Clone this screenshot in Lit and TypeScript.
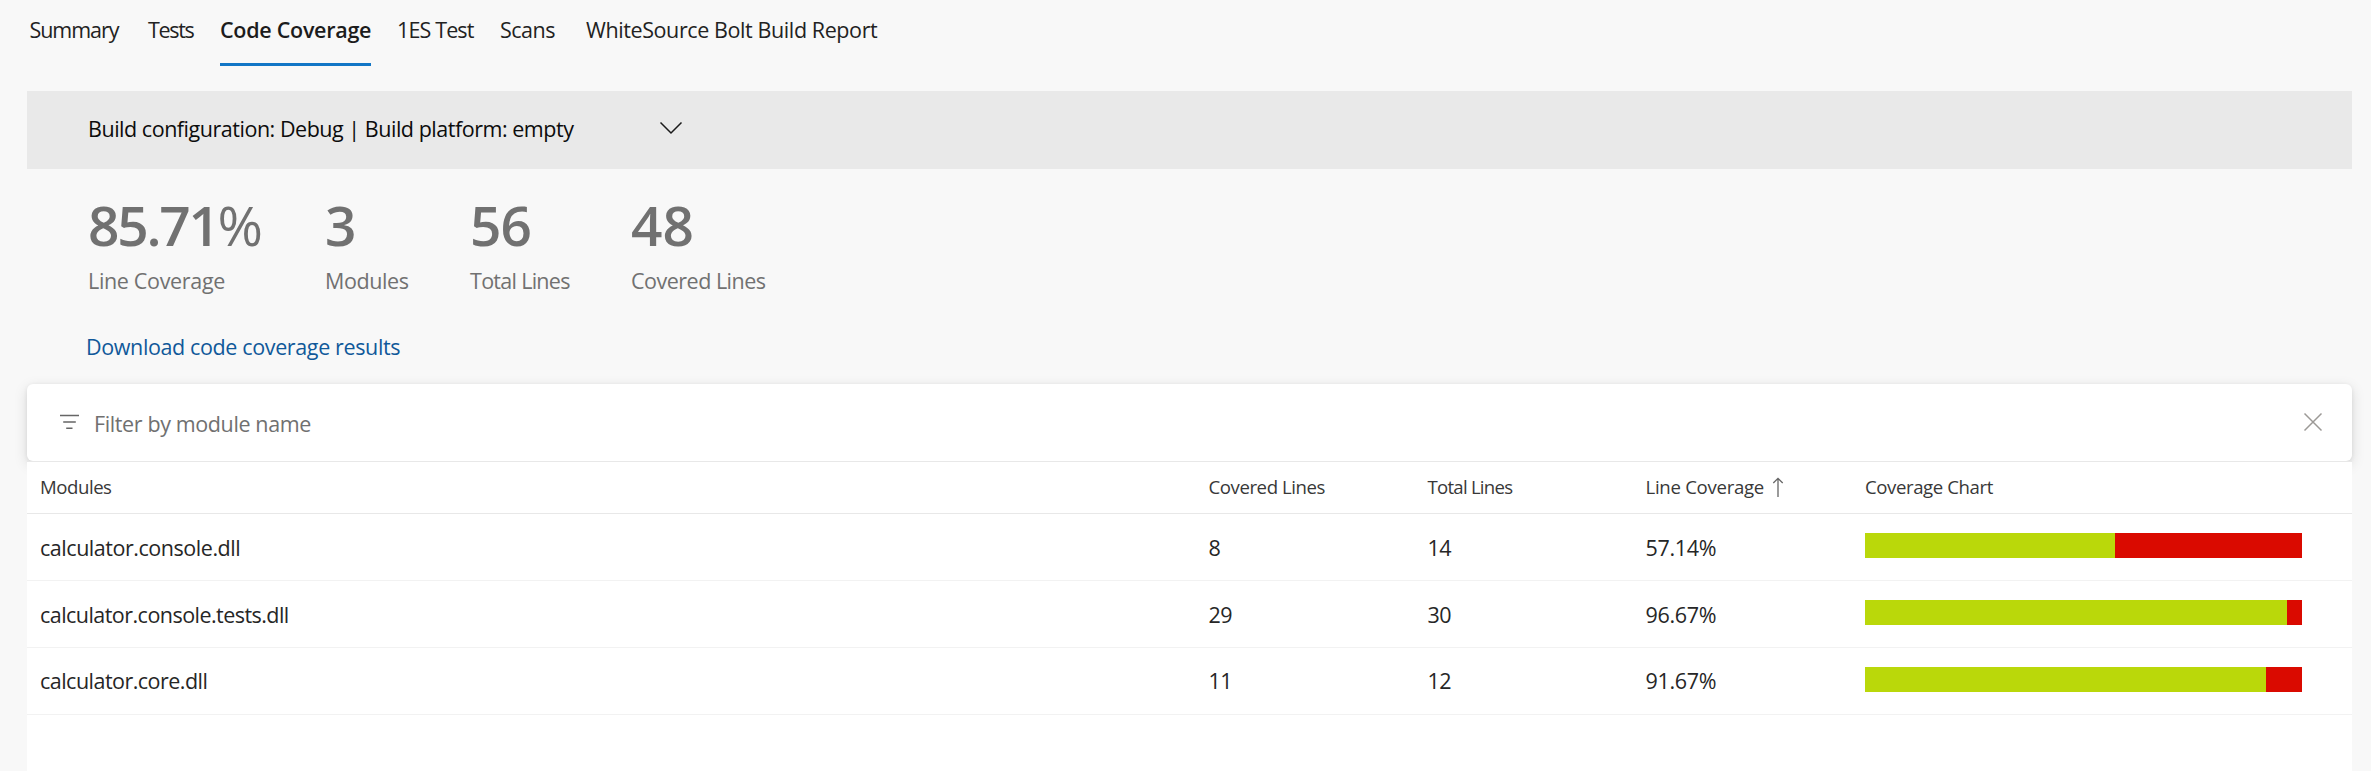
import { LitElement, html, css } from "lit";
import { customElement, property } from "lit/decorators.js";

const base = css`
  * { box-sizing: border-box; }
  :host {
    font-family: "Open Sans", "Noto Sans", sans-serif;
    font-size: 21.5px;
    line-height: 30px;
    white-space: nowrap;
  }
`;

@customElement("coverage-tabs")
class CoverageTabs extends LitElement {
  static styles = [base, css`
    :host { display: block; }
    .tabs {
      display: grid;
      grid-template-columns: 118.5px 72px 177px 103px 86px auto;
      padding-left: 29.5px;
      height: 66px;
      color: #222;
    }
    .tab { padding-top: 15px; justify-self: start; }
    .active {
      width: 151px;
      font-weight: 600;
      color: #1c1c1c;
      border-bottom: 3px solid #1276c6;
    }
    .summary { letter-spacing: -1.05px; }
    .tests { letter-spacing: -1.3px; }
    .code { letter-spacing: -0.28px; }
    .one-es { letter-spacing: -0.86px; }
    .scans { letter-spacing: -0.5px; }
    .bolt { letter-spacing: -0.4px; }
  `];
  render() {
    return html`<nav class="tabs">
      <span class="tab summary">Summary</span>
      <span class="tab tests">Tests</span>
      <span class="tab code active">Code Coverage</span>
      <span class="tab one-es">1ES Test</span>
      <span class="tab scans">Scans</span>
      <span class="tab bolt">WhiteSource Bolt Build Report</span>
    </nav>`;
  }
}

@customElement("coverage-summary")
class CoverageSummary extends LitElement {
  static styles = [base, css`
    :host { display: block; }
    .config {
      display: flex;
      height: 78px;
      padding: 23px 0 0 61px;
      background: #e9e9e9;
      color: #0c0c0c;
    }
    .config-text { width: 571px; letter-spacing: -0.47px; }
    .chevron { width: 24px; height: 16px; margin-top: 6px; }
    .stats {
      display: grid;
      grid-template-columns: 237px 145px 161px auto;
      padding: 26px 0 0 61px;
      color: #717171;
    }
    .value {
      font-size: 55px;
      font-weight: 600;
      line-height: 60px;
      margin-bottom: 11px;
    }
    .pct { letter-spacing: -2.25px; }
    .sign { font-weight: 400; }
    .lines { letter-spacing: -1px; }
    .l-rate { letter-spacing: -0.33px; }
    .l-modules { letter-spacing: -0.4px; }
    .l-total { letter-spacing: -0.71px; }
    .l-covered { letter-spacing: -0.5px; }
    .download {
      display: block;
      margin: 36px 0 22px 59px;
      color: #10599a;
      letter-spacing: -0.37px;
    }
  `];
  render() {
    return html`
      <div class="config">
        <span class="config-text">Build configuration: Debug | Build platform: empty</span>
        <svg class="chevron" viewBox="0 0 24 16" fill="none" stroke="#1a1a1a" stroke-width="1.5">
          <path d="M1.5 2.5 L12 13 L22.5 2.5" />
        </svg>
      </div>
      <div class="stats">
        <div><div class="value pct">85.71<span class="sign">%</span></div><div class="l-rate">Line Coverage</div></div>
        <div><div class="value">3</div><div class="l-modules">Modules</div></div>
        <div><div class="value lines">56</div><div class="l-total">Total Lines</div></div>
        <div><div class="value">48</div><div class="l-covered">Covered Lines</div></div>
      </div>
      <a class="download">Download code coverage results</a>
    `;
  }
}

@customElement("module-filter")
class ModuleFilter extends LitElement {
  static styles = [base, css`
    :host { display: block; }
    .card {
      display: flex;
      height: 77px;
      padding: 26px 29px 0 32px;
      background: #fff;
      border-radius: 6px;
      box-shadow: 0 4px 14px rgba(0, 0, 0, 0.13), 0 1px 4px rgba(0, 0, 0, 0.07);
      color: #707070;
    }
    .icon { width: 20px; height: 20px; margin: 2px 15px 0 0; }
    .text { flex: 1; letter-spacing: -0.38px; line-height: 28px; }
    .clear { width: 20px; height: 20px; margin-top: 2px; }
  `];
  render() {
    return html`<div class="card">
      <svg class="icon" viewBox="0 0 20 20" stroke="#666" stroke-width="1.4">
        <path d="M1 3.5H20M4.2 10H16.8M7.2 16.3H13.5" />
      </svg>
      <span class="text">Filter by module name</span>
      <svg class="clear" viewBox="0 0 20 20" stroke="#9c9996" stroke-width="1.5">
        <path d="M1.5 1.5L18.5 18.5M18.5 1.5L1.5 18.5" />
      </svg>
    </div>`;
  }
}

@customElement("coverage-bar")
class CoverageBar extends LitElement {
  @property({ type: Number }) covered = 0;
  @property({ type: Number }) total = 1;
  static styles = css`
    :host { display: block; }
    .bar { height: 25px; background: #da0a00; }
    .fill { height: 25px; background: #bad80a; }
  `;
  render() {
    return html`<div class="bar">
      <div class="fill" style="width:${Math.round((this.covered / this.total) * 437)}px"></div>
    </div>`;
  }
}

const modules = [
  { name: "calculator.console.dll", key: "console", covered: 8, total: 14, rate: "57.14%" },
  { name: "calculator.console.tests.dll", key: "suite", covered: 29, total: 30, rate: "96.67%" },
  { name: "calculator.core.dll", key: "core", covered: 11, total: 12, rate: "91.67%" },
];

@customElement("module-table")
class ModuleTable extends LitElement {
  static styles = [base, css`
    :host { display: block; flex: 1; background: #fff; border-top: 1px solid #e8e8e8; }
    .row {
      display: grid;
      grid-template-columns: 1168.5px 219px 218px 219.5px 437px;
      align-items: center;
      height: 67px;
      padding: 1px 0 0 13px;
      border-bottom: 1px solid #f2f2f2;
      color: #262626;
    }
    .row:last-child { padding-top: 0; }
    .row:last-child .chart { margin-top: 19px; }
    .head {
      height: 52px;
      padding: 0 0 1px 13px;
      font-size: 18.6px;
      color: #383838;
      border-bottom-color: #e8e8e8;
    }
    .sorted { display: flex; align-items: center; gap: 8px; }
    .arrow { width: 12px; height: 20px; }
    .h-modules { letter-spacing: -0.45px; }
    .h-covered { letter-spacing: -0.42px; }
    .h-total { letter-spacing: -0.75px; }
    .h-rate { letter-spacing: -0.28px; }
    .h-chart { letter-spacing: -0.41px; }
    .console { letter-spacing: -0.46px; }
    .suite { letter-spacing: -0.54px; }
    .core { letter-spacing: -0.52px; }
    .num { letter-spacing: -0.5px; }
    .rate { letter-spacing: -0.3px; }
    .chart { align-self: start; margin-top: 18px; }
  `];
  render() {
    return html`
      <div class="row head">
        <span class="h-modules">Modules</span>
        <span class="h-covered">Covered Lines</span>
        <span class="h-total">Total Lines</span>
        <span class="sorted">
          <span class="h-rate">Line Coverage</span>
          <svg class="arrow" viewBox="0 0 12 20" fill="none" stroke="#666" stroke-width="1.3">
            <path d="M6 1V20M1.3 6L6 1.3L10.7 6" />
          </svg>
        </span>
        <span class="h-chart">Coverage Chart</span>
      </div>
      ${modules.map((m) => html`<div class="row">
        <span class=${m.key}>${m.name}</span>
        <span class="num">${m.covered}</span>
        <span class="num">${m.total}</span>
        <span class="rate">${m.rate}</span>
        <coverage-bar class="chart" .covered=${m.covered} .total=${m.total}></coverage-bar>
      </div>`)}
    `;
  }
}

@customElement("app-root")
class AppRoot extends LitElement {
  static styles = css`
    :host { display: block; }
    .page {
      display: flex;
      flex-direction: column;
      height: 100vh;
      overflow: hidden;
      background: #f8f8f8;
    }
    .body {
      display: flex;
      flex-direction: column;
      flex: 1;
      margin: 25px 19px 0 27px;
    }
  `;
  render() {
    return html`<div class="page">
      <coverage-tabs></coverage-tabs>
      <div class="body">
        <coverage-summary></coverage-summary>
        <module-filter></module-filter>
        <module-table></module-table>
      </div>
    </div>`;
  }
}
